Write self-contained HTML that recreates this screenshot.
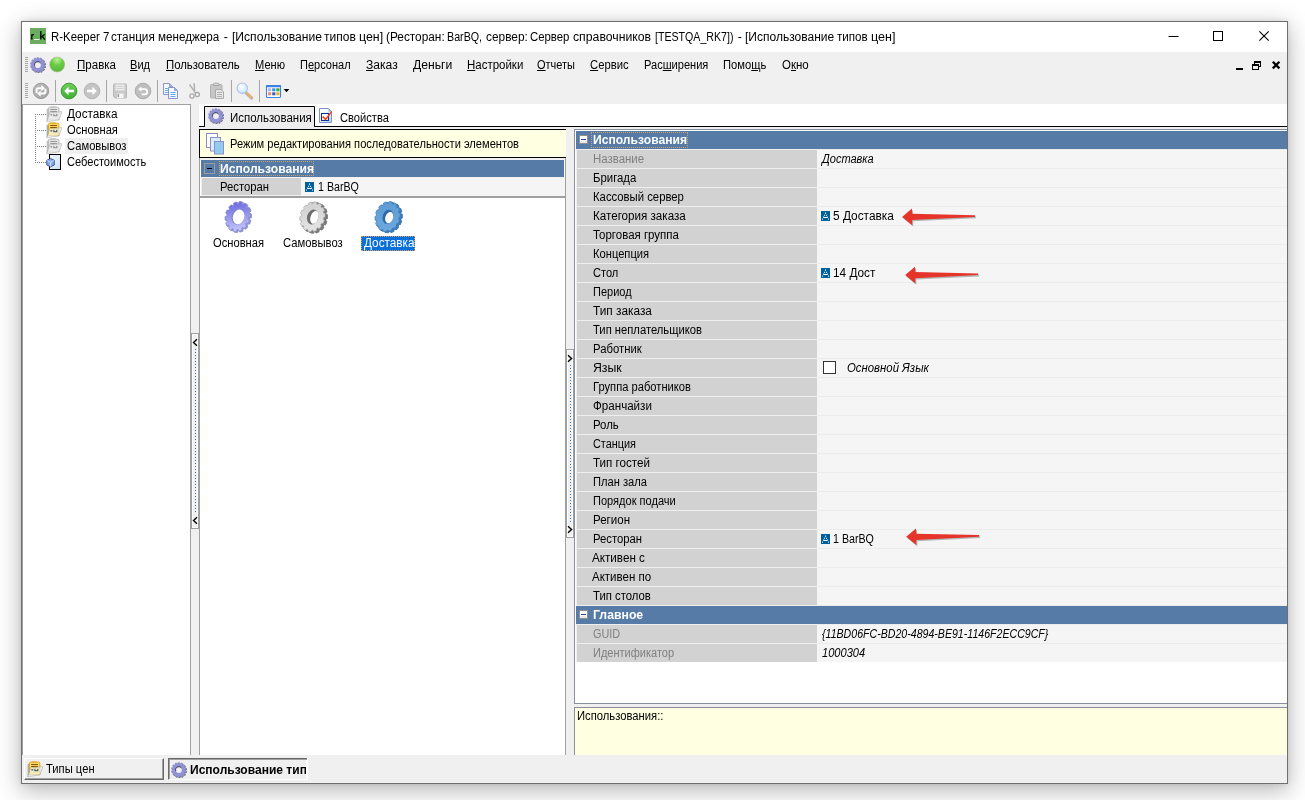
<!DOCTYPE html>
<html lang="ru"><head><meta charset="utf-8"><title>R-Keeper 7</title>
<style>
html,body{margin:0;padding:0;}
body{width:1305px;height:800px;position:relative;overflow:hidden;background:#fff;font-family:"Liberation Sans",sans-serif;}
.a{position:absolute;box-sizing:border-box;}
.t{position:absolute;transform-origin:0 0;white-space:pre;line-height:14px;height:14px;font-family:"Liberation Sans",sans-serif;}
.t u{text-decoration:underline;text-underline-offset:1px;}
svg{position:absolute;overflow:visible;}

</style></head>
<body>
<!-- window frame + shadow -->
<div class="a" style="left:21px;top:21px;width:1267px;height:763px;background:#f0f0f0;border:1px solid #6f6f6f;box-shadow:0 6px 22px 1px rgba(0,0,0,.28),0 0 5px rgba(0,0,0,.10);"></div>
<!-- title bar -->
<div class="a" style="left:22px;top:22px;width:1265px;height:30px;background:#fff;"></div>
<div class="a" style="left:30px;top:28px;width:16px;height:16px;background:#6aad5f;"></div>
<svg style="left:30px;top:28px" width="16" height="16" viewBox="0 0 16 16">
<path d="M1.8 11.6V6.2M1.8 8.2C1.9 6.9 2.8 6.4 4 6.6" stroke="#000" stroke-width="1.3" fill="none"/>
<path d="M10.8 11.6V3M14.6 6.2L11.2 9.3M12.4 8.3L14.8 11.6" stroke="#0b1a08" stroke-width="1.5" fill="none"/>
<rect x="4" y="11" width="5.6" height="1" fill="#e6f2e2"/>
</svg>
<!-- caption buttons -->
<svg style="left:1160px;top:24px" width="120" height="26" viewBox="0 0 120 26">
 <path d="M8.5 12.5h10" stroke="#000" stroke-width="1" fill="none"/>
 <rect x="53.5" y="7.5" width="9" height="9" stroke="#000" stroke-width="1" fill="none"/>
 <path d="M99.4 7.4l9.3 9.3M108.7 7.4l-9.3 9.3" stroke="#000" stroke-width="1.1" fill="none"/>
</svg>
<!-- MDI buttons -->
<svg style="left:1230px;top:56px" width="56" height="20" viewBox="0 0 56 20" shape-rendering="crispEdges">
 <rect x="6" y="12" width="7" height="2" fill="#000"/>
 <rect x="24" y="5" width="7" height="2" fill="#000"/><rect x="30" y="5" width="1" height="6" fill="#000"/><rect x="24" y="5" width="1" height="3" fill="#000"/><rect x="29" y="10" width="2" height="1" fill="#000"/>
 <rect x="22" y="8" width="7" height="2" fill="#000"/><rect x="22" y="8" width="1" height="6" fill="#000"/><rect x="28" y="8" width="1" height="6" fill="#000"/><rect x="22" y="13" width="7" height="1" fill="#000"/>
 <path d="M42.8 5.8l6.6 6.6M49.4 5.8l-6.6 6.6" stroke="#000" stroke-width="2.3" fill="none" shape-rendering="auto"/>
</svg>

<!-- TOOLBARS -->
<div class="a" style="left:25px;top:57px;width:3px;height:1px;background:#a8a8a8;"></div><div class="a" style="left:25px;top:59px;width:3px;height:1px;background:#a8a8a8;"></div><div class="a" style="left:25px;top:61px;width:3px;height:1px;background:#a8a8a8;"></div><div class="a" style="left:25px;top:63px;width:3px;height:1px;background:#a8a8a8;"></div><div class="a" style="left:25px;top:65px;width:3px;height:1px;background:#a8a8a8;"></div><div class="a" style="left:25px;top:67px;width:3px;height:1px;background:#a8a8a8;"></div><div class="a" style="left:25px;top:69px;width:3px;height:1px;background:#a8a8a8;"></div><div class="a" style="left:25px;top:71px;width:3px;height:1px;background:#a8a8a8;"></div><div class="a" style="left:25px;top:83px;width:3px;height:1px;background:#a8a8a8;"></div><div class="a" style="left:25px;top:85px;width:3px;height:1px;background:#a8a8a8;"></div><div class="a" style="left:25px;top:87px;width:3px;height:1px;background:#a8a8a8;"></div><div class="a" style="left:25px;top:89px;width:3px;height:1px;background:#a8a8a8;"></div><div class="a" style="left:25px;top:91px;width:3px;height:1px;background:#a8a8a8;"></div><div class="a" style="left:25px;top:93px;width:3px;height:1px;background:#a8a8a8;"></div><div class="a" style="left:25px;top:95px;width:3px;height:1px;background:#a8a8a8;"></div><div class="a" style="left:25px;top:97px;width:3px;height:1px;background:#a8a8a8;"></div><svg style="left:30px;top:57px" width="17" height="17" viewBox="0 0 17 17">
<path d="M14.09 8.15 L15.26 8.71 L14.89 10.35 L13.60 10.35 L13.36 10.86 L14.17 11.86 L13.13 13.18 L11.97 12.63 L11.53 12.98 L11.82 14.23 L10.31 14.97 L9.50 13.97 L8.95 14.09 L8.67 15.35 L6.99 15.36 L6.70 14.10 L6.15 13.98 L5.35 14.99 L3.84 14.27 L4.12 13.01 L3.68 12.66 L2.52 13.23 L1.47 11.92 L2.27 10.91 L2.02 10.40 L0.73 10.41 L0.35 8.77 L1.51 8.21 L1.51 7.65 L0.34 7.09 L0.71 5.45 L2.00 5.45 L2.24 4.94 L1.43 3.94 L2.47 2.62 L3.63 3.17 L4.07 2.82 L3.78 1.57 L5.29 0.83 L6.10 1.83 L6.65 1.71 L6.93 0.45 L8.61 0.44 L8.90 1.70 L9.45 1.82 L10.25 0.81 L11.76 1.53 L11.48 2.79 L11.92 3.14 L13.08 2.57 L14.13 3.88 L13.33 4.89 L13.58 5.40 L14.87 5.39 L15.25 7.03 L14.09 7.59Z M10.90 7.90 A3.10 3.10 0 1 0 4.70 7.90 A3.10 3.10 0 1 0 10.90 7.90Z" fill="#303038" fill-rule="evenodd" transform="translate(0.7,0.7)" opacity=".78"/>
<path d="M14.09 8.15 L15.26 8.71 L14.89 10.35 L13.60 10.35 L13.36 10.86 L14.17 11.86 L13.13 13.18 L11.97 12.63 L11.53 12.98 L11.82 14.23 L10.31 14.97 L9.50 13.97 L8.95 14.09 L8.67 15.35 L6.99 15.36 L6.70 14.10 L6.15 13.98 L5.35 14.99 L3.84 14.27 L4.12 13.01 L3.68 12.66 L2.52 13.23 L1.47 11.92 L2.27 10.91 L2.02 10.40 L0.73 10.41 L0.35 8.77 L1.51 8.21 L1.51 7.65 L0.34 7.09 L0.71 5.45 L2.00 5.45 L2.24 4.94 L1.43 3.94 L2.47 2.62 L3.63 3.17 L4.07 2.82 L3.78 1.57 L5.29 0.83 L6.10 1.83 L6.65 1.71 L6.93 0.45 L8.61 0.44 L8.90 1.70 L9.45 1.82 L10.25 0.81 L11.76 1.53 L11.48 2.79 L11.92 3.14 L13.08 2.57 L14.13 3.88 L13.33 4.89 L13.58 5.40 L14.87 5.39 L15.25 7.03 L14.09 7.59Z M10.90 7.90 A3.10 3.10 0 1 0 4.70 7.90 A3.10 3.10 0 1 0 10.90 7.90Z" fill="#9192d3" fill-rule="evenodd" stroke="#9192d3" stroke-width="0.45" stroke-linejoin="round"/>
<circle cx="7.8" cy="7.9" r="2.9" fill="#f0f0f2" opacity=".85"/><circle cx="7.8" cy="7.9" r="3.3" fill="none" stroke="#34343f" stroke-width="0.9" opacity=".75" stroke-dasharray="9 30" transform="rotate(165 7.8 7.9)"/>
</svg><svg style="left:49px;top:56px" width="17" height="17" viewBox="0 0 17 17">
<defs><radialGradient id="gb" cx="0.5" cy="0.2" r="0.8"><stop offset="0" stop-color="#b6f58e"/><stop offset="0.45" stop-color="#6bcb47"/><stop offset="1" stop-color="#58b83c"/></radialGradient></defs>
<circle cx="8.2" cy="8.5" r="7.6" fill="url(#gb)" stroke="#c9b8a8" stroke-width="0.5"/></svg><svg style="left:32px;top:82px" width="18" height="18" viewBox="0 0 18 18">
<defs><linearGradient id="rg" x1="0" y1="0" x2="1" y2="1"><stop offset="0" stop-color="#bdbdbd"/><stop offset="1" stop-color="#a2a2a2"/></linearGradient></defs>
<circle cx="9" cy="8.9" r="7.7" fill="url(#rg)" stroke="#9a9a9a" stroke-width="1"/>
<path d="M4.6 11V8Q4.6 6.2 6.4 6.2H9.6" stroke="#fff" stroke-width="2" fill="none"/><path d="M9.3 3.1L12.8 6.2L9.3 9.3Z" fill="#fff"/>
<path d="M13.4 6.8V9.8Q13.4 11.6 11.6 11.6H8.4" stroke="#fff" stroke-width="2" fill="none"/><path d="M8.7 14.7L5.2 11.6L8.7 8.5Z" fill="#fff"/>
</svg><div class="a" style="left:55px;top:80px;width:1px;height:22px;background:#a6a6a6;"></div><svg style="left:60px;top:82px" width="18" height="18" viewBox="0 0 18 18">
<defs><linearGradient id="gg" x1="0" y1="0" x2="0" y2="1"><stop offset="0" stop-color="#6fd05c"/><stop offset="1" stop-color="#3fae32"/></linearGradient></defs>
<circle cx="9" cy="9" r="7.8" fill="url(#gg)" stroke="#3c9a30" stroke-width="1"/>
<path d="M4.2 9L8.6 4.8V7.8H14V10.2H8.6V13.2Z" fill="#fff"/></svg><svg style="left:83px;top:82px" width="18" height="18" viewBox="0 0 18 18">
<circle cx="9" cy="9" r="7.8" fill="#c4c4c4" stroke="#b4b4b4" stroke-width="1"/>
<path d="M13.8 9L9.4 4.8V7.8H4V10.2H9.4V13.2Z" fill="#fff"/></svg><div class="a" style="left:106px;top:80px;width:1px;height:22px;background:#a6a6a6;"></div><svg style="left:113px;top:83px" width="14" height="16" viewBox="0 0 14 16">
<path d="M1.2 1H12.8Q13.5 1 13.5 2V14Q13.5 15 12.5 15H2.2L0.5 13.4V2Q0.5 1 1.2 1Z" fill="#c9c9c9" stroke="#bababa" stroke-width="1"/>
<rect x="2.5" y="1.5" width="9" height="6" fill="#ececec"/><path d="M3.5 3.5h7M3.5 5.5h7" stroke="#d0d0d0" stroke-width="1"/>
<rect x="4" y="10.5" width="6.5" height="4.5" fill="#f6f6f6"/><rect x="4.5" y="11" width="1.6" height="3.2" fill="#a0a0a0"/></svg><svg style="left:134px;top:82px" width="18" height="18" viewBox="0 0 18 18">
<circle cx="9" cy="9" r="7.8" fill="#bebebe" stroke="#adadad" stroke-width="1"/>
<path d="M6.4 7.2H10.6A2.6 2.6 0 0 1 10.6 12.4H7.6" stroke="#fff" stroke-width="1.8" fill="none"/><path d="M4.2 7.2L7.4 4.4V10Z" fill="#fff"/></svg><div class="a" style="left:157px;top:80px;width:1px;height:22px;background:#a6a6a6;"></div><svg style="left:162px;top:82px" width="17" height="18" viewBox="0 0 17 18">
<path d="M1.5 1.5H7.5L10.5 4.5V12.5H1.5Z" fill="#f4faff" stroke="#8c92cc" stroke-width="1"/><path d="M7.5 1.5V4.5H10.5" fill="#7fc0f4" stroke="#8c92cc" stroke-width="0.8"/>
<path d="M3 6.5h3M3 8.5h3M3 10.5h3" stroke="#6ab0f0" stroke-width="1"/>
<path d="M6.5 5.5H12.5L15.5 8.5V16.5H6.5Z" fill="#f4faff" stroke="#8c92cc" stroke-width="1"/><path d="M12.5 5.5V8.5H15.5" fill="#7fc0f4" stroke="#8c92cc" stroke-width="0.8"/>
<path d="M8.5 10.5h5M8.5 12.5h5M8.5 14.5h5" stroke="#5aa8f0" stroke-width="1.2"/></svg><svg style="left:188px;top:82px" width="13" height="18" viewBox="0 0 13 18">
<path d="M1.5 2.5L8.2 11.8M6.2 1.2L6.6 10.5" stroke="#b2b2b2" stroke-width="1.5" fill="none"/>
<circle cx="4" cy="14" r="2.1" fill="#f4f4f4" stroke="#a8a8a8" stroke-width="1.3"/><circle cx="9.3" cy="12.6" r="2.1" fill="#f4f4f4" stroke="#a8a8a8" stroke-width="1.3"/></svg><svg style="left:209px;top:82px" width="16" height="18" viewBox="0 0 16 18">
<rect x="1.5" y="2.5" width="11.5" height="13.5" rx="1" fill="#c6c6c6" stroke="#b0b0b0"/>
<path d="M4.5 3.5V2.2Q4.5 1.2 5.5 1.2H9Q10 1.2 10 2.2V3.5Z" fill="#d8d8d8" stroke="#a8a8a8" stroke-width="1"/>
<path d="M6.5 7.5H12L14.5 10V16.5H6.5Z" fill="#e4e4e4" stroke="#aaa" stroke-width="1"/>
<path d="M8 10.5h5M8 12.5h5M8 14.5h5" stroke="#b4b4b4" stroke-width="1"/></svg><div class="a" style="left:231px;top:80px;width:1px;height:22px;background:#a6a6a6;"></div><svg style="left:236px;top:82px" width="18" height="18" viewBox="0 0 18 18">
<defs><radialGradient id="lens" cx="0.4" cy="0.35" r="0.7"><stop offset="0" stop-color="#ffffff"/><stop offset="1" stop-color="#bfe6fb"/></radialGradient></defs>
<path d="M9.8 10.6L15.6 16" stroke="#b9b4ae" stroke-width="3.2" stroke-linecap="round"/><path d="M10.4 10.4L15.4 15.2" stroke="#eeb064" stroke-width="1.9" stroke-linecap="round"/>
<circle cx="6.3" cy="6.2" r="5.2" fill="url(#lens)" stroke="#b4bcea" stroke-width="1.1"/></svg><div class="a" style="left:259px;top:80px;width:1px;height:22px;background:#a6a6a6;"></div><svg style="left:265px;top:84px" width="26" height="15" viewBox="0 0 26 15">
<rect x="1.5" y="1.5" width="14" height="12" rx="1" fill="#fff" stroke="#3c82e2" stroke-width="1.1"/><rect x="1" y="0.9" width="15" height="2.3" rx="0.8" fill="#3c82e2"/>
<rect x="3" y="4.3" width="3.2" height="3" fill="#b2b2de"/><rect x="7.2" y="4.3" width="3.2" height="3" fill="#3593ea"/><rect x="11.3" y="4.3" width="3.2" height="3" fill="#33a63b"/>
<rect x="3" y="8.3" width="3.2" height="3" fill="#f28a66"/><rect x="7.2" y="8.3" width="3.2" height="3" fill="#3d5cb6"/><rect x="11.3" y="8.3" width="3.2" height="3" fill="#dfb236"/>
<path d="M18.7 5H24.3L21.5 8.2Z" fill="#000"/></svg>

<!-- left tree panel -->
<div class="a" style="left:22px;top:104px;width:169px;height:651px;background:#fff;border:1px solid #a0a0a0;border-bottom:none;"></div>
<div class="a" style="left:65px;top:138px;width:63px;height:16px;background:#f0f0f0;"></div>
<svg style="left:35px;top:114px" width="12" height="50" viewBox="0 0 12 50">
<path d="M0.5 0v49M0 0.5h11M0 16.5h11M0 32.5h11M0 48.5h11" stroke="#808080" stroke-width="1" stroke-dasharray="1 1" fill="none"/></svg><svg style="left:46px;top:106px" width="17" height="17" viewBox="0 0 17 17">
<path d="M0.6 3L2.6 2.4V14L0.6 15.8Z" fill="#c4c4c4"/>
<path d="M4.6 0.5H9.8V1.5H4.6Z" fill="#b2b2b2"/>
<path d="M2.4 2.6Q2.4 1.2 3.8 1.2H11.4Q12.9 1.2 12.9 2.6V13.6H2.4Z" fill="#e4e4e4" stroke="#b2b2b2" stroke-width="0.9"/>
<path d="M4.2 3.5h6.8M4.2 5.5h6.8" stroke="#989898" stroke-width="1.1"/>
<path d="M3.6 6.9L15.9 5.6L13 13.9L0.7 15.7Z" fill="#eeeeee" stroke="#adadad" stroke-width="0.8" opacity="0.78"/>
<path d="M4.4 8.9h1.9M7.9 7.8v2h2.9v-2" stroke="#8c8c8c" stroke-width="1.1" fill="none"/>
</svg><svg style="left:46px;top:122px" width="17" height="17" viewBox="0 0 17 17">
<path d="M0.6 3L2.6 2.4V14L0.6 15.8Z" fill="#a6b2be"/>
<path d="M4.6 0.5H9.8V1.5H4.6Z" fill="#dc9c14"/>
<path d="M2.4 2.6Q2.4 1.2 3.8 1.2H11.4Q12.9 1.2 12.9 2.6V13.6H2.4Z" fill="#fbdc60" stroke="#dc9c14" stroke-width="0.9"/>
<path d="M4.2 3.5h6.8M4.2 5.5h6.8" stroke="#8c4c08" stroke-width="1.1"/>
<path d="M3.6 6.9L15.9 5.6L13 13.9L0.7 15.7Z" fill="#f2f6f8" stroke="#939da8" stroke-width="0.8" opacity="0.62"/>
<path d="M4.4 8.9h1.9M7.9 7.8v2h2.9v-2" stroke="#3c4e72" stroke-width="1.1" fill="none"/>
</svg><svg style="left:46px;top:138px" width="17" height="17" viewBox="0 0 17 17">
<path d="M0.6 3L2.6 2.4V14L0.6 15.8Z" fill="#c4c4c4"/>
<path d="M4.6 0.5H9.8V1.5H4.6Z" fill="#b2b2b2"/>
<path d="M2.4 2.6Q2.4 1.2 3.8 1.2H11.4Q12.9 1.2 12.9 2.6V13.6H2.4Z" fill="#e4e4e4" stroke="#b2b2b2" stroke-width="0.9"/>
<path d="M4.2 3.5h6.8M4.2 5.5h6.8" stroke="#989898" stroke-width="1.1"/>
<path d="M3.6 6.9L15.9 5.6L13 13.9L0.7 15.7Z" fill="#eeeeee" stroke="#adadad" stroke-width="0.8" opacity="0.78"/>
<path d="M4.4 8.9h1.9M7.9 7.8v2h2.9v-2" stroke="#8c8c8c" stroke-width="1.1" fill="none"/>
</svg><svg style="left:46px;top:154px" width="17" height="17" viewBox="0 0 17 17">
<defs><linearGradient id="dc" x1="0" y1="0" x2="1" y2="1"><stop offset="0" stop-color="#f4fafc"/><stop offset="1" stop-color="#c6dff0"/></linearGradient></defs>
<rect x="3.5" y="0.5" width="11" height="15" fill="url(#dc)" stroke="#000" stroke-width="1"/>
<path d="M4.5 4.4L8.3 6.3V10.9L4.5 13L0.7 10.9V6.3Z" fill="#84a8f2" stroke="#1c2c58" stroke-width="0.7"/>
<path d="M0.9 6.4L4.5 8.3L8.1 6.4M4.5 8.3V12.8" stroke="#dfe9ff" stroke-width="0.8" fill="none"/>
</svg>

<!-- splitter 1 -->
<div class="a" style="left:190px;top:333px;width:10px;height:196px;background:#a0a0a0;"></div>
<div class="a" style="left:192px;top:334px;width:6px;height:194px;background:#fff;"></div>
<div class="a" style="left:193px;top:335px;width:4px;height:192px;background:#f0f0f0;"></div>
<svg style="left:190px;top:333px" width="10" height="196" viewBox="0 0 10 196">
 <path d="M7.0 6.2L3.5 9.5L7.0 12.8M7.0 184.2L3.5 187.5L7.0 190.8" stroke="#000" stroke-width="1.4" fill="none"/>
 <path d="M5.5 16v163" stroke="#1a7fe6" stroke-width="1" stroke-dasharray="1 2" fill="none"/>
</svg>

<!-- middle panel -->
<div class="a" style="left:199px;top:104px;width:1088px;height:22px;background:#fff;"></div>
<div class="a" style="left:199px;top:126px;width:1088px;height:1px;background:#000;"></div>
<div class="a" style="left:199px;top:158px;width:367px;height:597px;background:#f0f0f0;border-left:1px solid #a0a0a0;border-right:1px solid #a0a0a0;"></div>
<div class="a" style="left:200px;top:160px;width:365px;height:595px;background:#fff;"></div>
<!-- tab -->
<svg style="left:199px;top:104px" width="200" height="25" viewBox="0 0 200 25">
 <path d="M0 22.5H5.5V2.5H115.5V22.5" fill="#ededed" stroke="#000" stroke-width="1"/>
 <rect x="6" y="22" width="109" height="3" fill="#ededed"/>
</svg>
<svg style="left:208px;top:108px" width="17" height="17" viewBox="0 0 17 17">
<path d="M14.09 8.15 L15.26 8.71 L14.89 10.35 L13.60 10.35 L13.36 10.86 L14.17 11.86 L13.13 13.18 L11.97 12.63 L11.53 12.98 L11.82 14.23 L10.31 14.97 L9.50 13.97 L8.95 14.09 L8.67 15.35 L6.99 15.36 L6.70 14.10 L6.15 13.98 L5.35 14.99 L3.84 14.27 L4.12 13.01 L3.68 12.66 L2.52 13.23 L1.47 11.92 L2.27 10.91 L2.02 10.40 L0.73 10.41 L0.35 8.77 L1.51 8.21 L1.51 7.65 L0.34 7.09 L0.71 5.45 L2.00 5.45 L2.24 4.94 L1.43 3.94 L2.47 2.62 L3.63 3.17 L4.07 2.82 L3.78 1.57 L5.29 0.83 L6.10 1.83 L6.65 1.71 L6.93 0.45 L8.61 0.44 L8.90 1.70 L9.45 1.82 L10.25 0.81 L11.76 1.53 L11.48 2.79 L11.92 3.14 L13.08 2.57 L14.13 3.88 L13.33 4.89 L13.58 5.40 L14.87 5.39 L15.25 7.03 L14.09 7.59Z M10.90 7.90 A3.10 3.10 0 1 0 4.70 7.90 A3.10 3.10 0 1 0 10.90 7.90Z" fill="#303038" fill-rule="evenodd" transform="translate(0.7,0.7)" opacity=".78"/>
<path d="M14.09 8.15 L15.26 8.71 L14.89 10.35 L13.60 10.35 L13.36 10.86 L14.17 11.86 L13.13 13.18 L11.97 12.63 L11.53 12.98 L11.82 14.23 L10.31 14.97 L9.50 13.97 L8.95 14.09 L8.67 15.35 L6.99 15.36 L6.70 14.10 L6.15 13.98 L5.35 14.99 L3.84 14.27 L4.12 13.01 L3.68 12.66 L2.52 13.23 L1.47 11.92 L2.27 10.91 L2.02 10.40 L0.73 10.41 L0.35 8.77 L1.51 8.21 L1.51 7.65 L0.34 7.09 L0.71 5.45 L2.00 5.45 L2.24 4.94 L1.43 3.94 L2.47 2.62 L3.63 3.17 L4.07 2.82 L3.78 1.57 L5.29 0.83 L6.10 1.83 L6.65 1.71 L6.93 0.45 L8.61 0.44 L8.90 1.70 L9.45 1.82 L10.25 0.81 L11.76 1.53 L11.48 2.79 L11.92 3.14 L13.08 2.57 L14.13 3.88 L13.33 4.89 L13.58 5.40 L14.87 5.39 L15.25 7.03 L14.09 7.59Z M10.90 7.90 A3.10 3.10 0 1 0 4.70 7.90 A3.10 3.10 0 1 0 10.90 7.90Z" fill="#9192d3" fill-rule="evenodd" stroke="#9192d3" stroke-width="0.45" stroke-linejoin="round"/>
<circle cx="7.8" cy="7.9" r="2.9" fill="#f0f0f2" opacity=".85"/><circle cx="7.8" cy="7.9" r="3.3" fill="none" stroke="#34343f" stroke-width="0.9" opacity=".75" stroke-dasharray="9 30" transform="rotate(165 7.8 7.9)"/>
</svg><svg style="left:319px;top:108px" width="14" height="15" viewBox="0 0 14 15">
<defs><linearGradient id="pd" x1="0" y1="0" x2="1" y2="1"><stop offset="0.3" stop-color="#fff"/><stop offset="1" stop-color="#a9dcf8"/></linearGradient></defs>
<path d="M0.5 0.5H9.5L12.5 3.5V14.5H0.5Z" fill="url(#pd)" stroke="#7f8fd2" stroke-width="1"/><path d="M9.5 0.5V3.5H12.5Z" fill="#6ab8f6"/>
<rect x="2.5" y="5.5" width="7" height="7" fill="#fff" stroke="#0a2f9e" stroke-width="1.1"/>
<path d="M3.6 8.6L6.6 11.4L12.8 3.4" stroke="#ff3a0a" stroke-width="1.5" fill="none"/></svg>
<!-- info bar -->
<div class="a" style="left:199px;top:129px;width:367px;height:29px;background:#ffffe1;border:1px solid #000;border-right:none;"></div>
<svg style="left:205px;top:132px" width="20" height="23" viewBox="0 0 20 23">
<rect x="1.5" y="1.5" width="11" height="14" fill="#fdfeff" stroke="#8a8ac6" stroke-width="1"/>
<rect x="5.5" y="5.5" width="10" height="13.5" fill="#d9eefb" stroke="#8a8ac6" stroke-width="1" opacity=".95"/>
<rect x="9.5" y="9.5" width="9" height="12.5" fill="#8ecbf1" stroke="#8a8ac6" stroke-width="1" opacity=".95"/></svg>
<!-- header -->
<div class="a" style="left:201px;top:160px;width:363px;height:17px;background:#557ba6;"></div>
<div class="a" style="left:204px;top:163px;width:11px;height:11px;border:1px solid #9b9b9b;background:#557ba6;"></div>
<div class="a" style="left:207px;top:168px;width:5px;height:1px;background:#000;"></div>
<div class="a" style="left:219px;top:161px;width:95px;height:15px;border:1px dotted #c9a26b;"></div>
<!-- row -->
<div class="a" style="left:201px;top:177px;width:364px;height:1px;background:#f2f2f2;"></div>
<div class="a" style="left:201px;top:178px;width:100px;height:18px;background:#efefef;"></div>
<div class="a" style="left:202px;top:178px;width:99px;height:17px;background:#d2d2d2;"></div>
<div class="a" style="left:301px;top:178px;width:264px;height:18px;background:#f5f5f5;"></div>
<div class="a" style="left:200px;top:196px;width:365px;height:2px;background:#a0a0a0;"></div>
<svg style="left:305px;top:182px" width="9" height="10" viewBox="0 0 9 10">
<rect width="9" height="10" fill="#00609c"/>
<path d="M1.5 8.6V7.6M7.5 8.6V7.6M2.5 6.5h4M2.5 5.6v0.9M6.5 5.6v0.9M3.5 4.8v-1M5.5 4.8v-1M4.5 2.8v-1.3" stroke="#fff" stroke-width="1" fill="none"/>
</svg>
<!-- selection -->
<div class="a" style="left:361px;top:236px;width:54px;height:15px;background:#0a6fd8;border:1px dotted #d9a066;"></div>
<svg style="left:0;top:0" width="1305" height="800" viewBox="0 0 1305 800">
<defs><linearGradient id="g1" gradientUnits="userSpaceOnUse" x1="-6" y1="-16" x2="6" y2="16"><stop offset="0" stop-color="#6462de"/><stop offset="1" stop-color="#cfcfff"/></linearGradient></defs>
<g transform="translate(1.4,0.8)"><path d="M13.07 -0.86 L15.30 -0.19 L14.96 3.22 L12.64 3.44 L12.15 4.89 L13.86 6.47 L12.08 9.39 L9.89 8.59 L8.83 9.68 L9.68 11.84 L6.81 13.70 L5.19 12.03 L3.75 12.55 L3.59 14.87 L0.19 15.30 L-0.55 13.09 L-2.07 12.94 L-3.22 14.96 L-6.47 13.86 L-6.17 11.56 L-7.47 10.76 L-9.39 12.08 L-11.84 9.68 L-10.57 7.73 L-11.40 6.45 L-13.70 6.81 L-14.87 3.59 L-12.88 2.38 L-13.07 0.86 L-15.30 0.19 L-14.96 -3.22 L-12.64 -3.44 L-12.15 -4.89 L-13.86 -6.47 L-12.08 -9.39 L-9.89 -8.59 L-8.83 -9.68 L-9.68 -11.84 L-6.81 -13.70 L-5.19 -12.03 L-3.75 -12.55 L-3.59 -14.87 L-0.19 -15.30 L0.55 -13.09 L2.07 -12.94 L3.22 -14.96 L6.47 -13.86 L6.17 -11.56 L7.47 -10.76 L9.39 -12.08 L11.84 -9.68 L10.57 -7.73 L11.40 -6.45 L13.70 -6.81 L14.87 -3.59 L12.88 -2.38Z" transform="translate(237.6,216.6) rotate(17) scale(0.81,1)" fill="#8f95c6" stroke="#8f95c6" stroke-width="1" stroke-linejoin="round"/></g>
<g transform="translate(0.7,0.4)"><path d="M13.07 -0.86 L15.30 -0.19 L14.96 3.22 L12.64 3.44 L12.15 4.89 L13.86 6.47 L12.08 9.39 L9.89 8.59 L8.83 9.68 L9.68 11.84 L6.81 13.70 L5.19 12.03 L3.75 12.55 L3.59 14.87 L0.19 15.30 L-0.55 13.09 L-2.07 12.94 L-3.22 14.96 L-6.47 13.86 L-6.17 11.56 L-7.47 10.76 L-9.39 12.08 L-11.84 9.68 L-10.57 7.73 L-11.40 6.45 L-13.70 6.81 L-14.87 3.59 L-12.88 2.38 L-13.07 0.86 L-15.30 0.19 L-14.96 -3.22 L-12.64 -3.44 L-12.15 -4.89 L-13.86 -6.47 L-12.08 -9.39 L-9.89 -8.59 L-8.83 -9.68 L-9.68 -11.84 L-6.81 -13.70 L-5.19 -12.03 L-3.75 -12.55 L-3.59 -14.87 L-0.19 -15.30 L0.55 -13.09 L2.07 -12.94 L3.22 -14.96 L6.47 -13.86 L6.17 -11.56 L7.47 -10.76 L9.39 -12.08 L11.84 -9.68 L10.57 -7.73 L11.40 -6.45 L13.70 -6.81 L14.87 -3.59 L12.88 -2.38Z" transform="translate(237.6,216.6) rotate(17) scale(0.81,1)" fill="#8f95c6" stroke="#8f95c6" stroke-width="1" stroke-linejoin="round"/></g>
<path d="M13.07 -0.86 L15.30 -0.19 L14.96 3.22 L12.64 3.44 L12.15 4.89 L13.86 6.47 L12.08 9.39 L9.89 8.59 L8.83 9.68 L9.68 11.84 L6.81 13.70 L5.19 12.03 L3.75 12.55 L3.59 14.87 L0.19 15.30 L-0.55 13.09 L-2.07 12.94 L-3.22 14.96 L-6.47 13.86 L-6.17 11.56 L-7.47 10.76 L-9.39 12.08 L-11.84 9.68 L-10.57 7.73 L-11.40 6.45 L-13.70 6.81 L-14.87 3.59 L-12.88 2.38 L-13.07 0.86 L-15.30 0.19 L-14.96 -3.22 L-12.64 -3.44 L-12.15 -4.89 L-13.86 -6.47 L-12.08 -9.39 L-9.89 -8.59 L-8.83 -9.68 L-9.68 -11.84 L-6.81 -13.70 L-5.19 -12.03 L-3.75 -12.55 L-3.59 -14.87 L-0.19 -15.30 L0.55 -13.09 L2.07 -12.94 L3.22 -14.96 L6.47 -13.86 L6.17 -11.56 L7.47 -10.76 L9.39 -12.08 L11.84 -9.68 L10.57 -7.73 L11.40 -6.45 L13.70 -6.81 L14.87 -3.59 L12.88 -2.38Z" transform="translate(237.6,216.6) rotate(17) scale(0.81,1)" fill="url(#g1)" stroke="#8a8fd4" stroke-width="0.7" stroke-linejoin="round"/>
<ellipse cx="0" cy="0" rx="8.0" ry="7.9" transform="translate(237.9,216.79999999999998) rotate(17) scale(0.80,1)" fill="#7f86c0"/>
<ellipse cx="0" cy="0" rx="7.3" ry="7.5" transform="translate(238.6,216.9) rotate(17) scale(0.78,1)" fill="#fff"/>
</svg><svg style="left:0;top:0" width="1305" height="800" viewBox="0 0 1305 800">
<defs><linearGradient id="g2" gradientUnits="userSpaceOnUse" x1="-6" y1="-16" x2="6" y2="16"><stop offset="0" stop-color="#cfcfcf"/><stop offset="1" stop-color="#e6e6e6"/></linearGradient></defs>
<g transform="translate(2.6,1.4)"><path d="M13.57 -0.90 L15.30 -0.19 L14.96 3.22 L13.12 3.58 L12.62 5.08 L13.86 6.47 L12.08 9.39 L10.27 8.91 L9.16 10.05 L9.68 11.84 L6.81 13.70 L5.39 12.49 L3.89 13.03 L3.59 14.87 L0.19 15.30 L-0.57 13.59 L-2.14 13.43 L-3.22 14.96 L-6.47 13.86 L-6.41 12.00 L-7.76 11.17 L-9.39 12.08 L-11.84 9.68 L-10.98 8.03 L-11.84 6.70 L-13.70 6.81 L-14.87 3.59 L-13.37 2.47 L-13.57 0.90 L-15.30 0.19 L-14.96 -3.22 L-13.12 -3.58 L-12.62 -5.08 L-13.86 -6.47 L-12.08 -9.39 L-10.27 -8.91 L-9.16 -10.05 L-9.68 -11.84 L-6.81 -13.70 L-5.39 -12.49 L-3.89 -13.03 L-3.59 -14.87 L-0.19 -15.30 L0.57 -13.59 L2.14 -13.43 L3.22 -14.96 L6.47 -13.86 L6.41 -12.00 L7.76 -11.17 L9.39 -12.08 L11.84 -9.68 L10.98 -8.03 L11.84 -6.70 L13.70 -6.81 L14.87 -3.59 L13.37 -2.47Z" transform="translate(312.4,216.8) rotate(17) scale(0.81,1)" fill="#7a7a7a" stroke="#7a7a7a" stroke-width="1" stroke-linejoin="round"/></g>
<g transform="translate(1.3,0.7)"><path d="M13.57 -0.90 L15.30 -0.19 L14.96 3.22 L13.12 3.58 L12.62 5.08 L13.86 6.47 L12.08 9.39 L10.27 8.91 L9.16 10.05 L9.68 11.84 L6.81 13.70 L5.39 12.49 L3.89 13.03 L3.59 14.87 L0.19 15.30 L-0.57 13.59 L-2.14 13.43 L-3.22 14.96 L-6.47 13.86 L-6.41 12.00 L-7.76 11.17 L-9.39 12.08 L-11.84 9.68 L-10.98 8.03 L-11.84 6.70 L-13.70 6.81 L-14.87 3.59 L-13.37 2.47 L-13.57 0.90 L-15.30 0.19 L-14.96 -3.22 L-13.12 -3.58 L-12.62 -5.08 L-13.86 -6.47 L-12.08 -9.39 L-10.27 -8.91 L-9.16 -10.05 L-9.68 -11.84 L-6.81 -13.70 L-5.39 -12.49 L-3.89 -13.03 L-3.59 -14.87 L-0.19 -15.30 L0.57 -13.59 L2.14 -13.43 L3.22 -14.96 L6.47 -13.86 L6.41 -12.00 L7.76 -11.17 L9.39 -12.08 L11.84 -9.68 L10.98 -8.03 L11.84 -6.70 L13.70 -6.81 L14.87 -3.59 L13.37 -2.47Z" transform="translate(312.4,216.8) rotate(17) scale(0.81,1)" fill="#7a7a7a" stroke="#7a7a7a" stroke-width="1" stroke-linejoin="round"/></g>
<path d="M13.57 -0.90 L15.30 -0.19 L14.96 3.22 L13.12 3.58 L12.62 5.08 L13.86 6.47 L12.08 9.39 L10.27 8.91 L9.16 10.05 L9.68 11.84 L6.81 13.70 L5.39 12.49 L3.89 13.03 L3.59 14.87 L0.19 15.30 L-0.57 13.59 L-2.14 13.43 L-3.22 14.96 L-6.47 13.86 L-6.41 12.00 L-7.76 11.17 L-9.39 12.08 L-11.84 9.68 L-10.98 8.03 L-11.84 6.70 L-13.70 6.81 L-14.87 3.59 L-13.37 2.47 L-13.57 0.90 L-15.30 0.19 L-14.96 -3.22 L-13.12 -3.58 L-12.62 -5.08 L-13.86 -6.47 L-12.08 -9.39 L-10.27 -8.91 L-9.16 -10.05 L-9.68 -11.84 L-6.81 -13.70 L-5.39 -12.49 L-3.89 -13.03 L-3.59 -14.87 L-0.19 -15.30 L0.57 -13.59 L2.14 -13.43 L3.22 -14.96 L6.47 -13.86 L6.41 -12.00 L7.76 -11.17 L9.39 -12.08 L11.84 -9.68 L10.98 -8.03 L11.84 -6.70 L13.70 -6.81 L14.87 -3.59 L13.37 -2.47Z" transform="translate(312.4,216.8) rotate(17) scale(0.81,1)" fill="url(#g2)" stroke="#b0b0b0" stroke-width="0.7" stroke-linejoin="round"/>
<ellipse cx="0" cy="0" rx="7.0" ry="7.6" transform="translate(312.7,217.0) rotate(17) scale(0.80,1)" fill="#6e6e6e"/>
<ellipse cx="0" cy="0" rx="5.0" ry="6.6" transform="translate(314.4,217.4) rotate(17) scale(0.78,1)" fill="#fff"/>
</svg><svg style="left:0;top:0" width="1305" height="800" viewBox="0 0 1305 800">
<defs><linearGradient id="g3" gradientUnits="userSpaceOnUse" x1="-6" y1="-16" x2="6" y2="16"><stop offset="0" stop-color="#5a9ad4"/><stop offset="1" stop-color="#6faadf"/></linearGradient></defs>
<g transform="translate(2.2,1.2)"><path d="M13.87 -0.92 L15.30 -0.19 L14.96 3.22 L13.41 3.65 L12.89 5.19 L13.86 6.47 L12.08 9.39 L10.50 9.11 L9.36 10.27 L9.68 11.84 L6.81 13.70 L5.50 12.76 L3.98 13.32 L3.59 14.87 L0.19 15.30 L-0.58 13.89 L-2.19 13.73 L-3.22 14.96 L-6.47 13.86 L-6.55 12.26 L-7.93 11.42 L-9.39 12.08 L-11.84 9.68 L-11.22 8.21 L-12.10 6.84 L-13.70 6.81 L-14.87 3.59 L-13.67 2.53 L-13.87 0.92 L-15.30 0.19 L-14.96 -3.22 L-13.41 -3.65 L-12.89 -5.19 L-13.86 -6.47 L-12.08 -9.39 L-10.50 -9.11 L-9.36 -10.27 L-9.68 -11.84 L-6.81 -13.70 L-5.50 -12.76 L-3.98 -13.32 L-3.59 -14.87 L-0.19 -15.30 L0.58 -13.89 L2.19 -13.73 L3.22 -14.96 L6.47 -13.86 L6.55 -12.26 L7.93 -11.42 L9.39 -12.08 L11.84 -9.68 L11.22 -8.21 L12.10 -6.84 L13.70 -6.81 L14.87 -3.59 L13.67 -2.53Z" transform="translate(387.6,216.6) rotate(17) scale(0.81,1)" fill="#3d7bb6" stroke="#3d7bb6" stroke-width="1" stroke-linejoin="round"/></g>
<g transform="translate(1.1,0.6)"><path d="M13.87 -0.92 L15.30 -0.19 L14.96 3.22 L13.41 3.65 L12.89 5.19 L13.86 6.47 L12.08 9.39 L10.50 9.11 L9.36 10.27 L9.68 11.84 L6.81 13.70 L5.50 12.76 L3.98 13.32 L3.59 14.87 L0.19 15.30 L-0.58 13.89 L-2.19 13.73 L-3.22 14.96 L-6.47 13.86 L-6.55 12.26 L-7.93 11.42 L-9.39 12.08 L-11.84 9.68 L-11.22 8.21 L-12.10 6.84 L-13.70 6.81 L-14.87 3.59 L-13.67 2.53 L-13.87 0.92 L-15.30 0.19 L-14.96 -3.22 L-13.41 -3.65 L-12.89 -5.19 L-13.86 -6.47 L-12.08 -9.39 L-10.50 -9.11 L-9.36 -10.27 L-9.68 -11.84 L-6.81 -13.70 L-5.50 -12.76 L-3.98 -13.32 L-3.59 -14.87 L-0.19 -15.30 L0.58 -13.89 L2.19 -13.73 L3.22 -14.96 L6.47 -13.86 L6.55 -12.26 L7.93 -11.42 L9.39 -12.08 L11.84 -9.68 L11.22 -8.21 L12.10 -6.84 L13.70 -6.81 L14.87 -3.59 L13.67 -2.53Z" transform="translate(387.6,216.6) rotate(17) scale(0.81,1)" fill="#3d7bb6" stroke="#3d7bb6" stroke-width="1" stroke-linejoin="round"/></g>
<path d="M13.87 -0.92 L15.30 -0.19 L14.96 3.22 L13.41 3.65 L12.89 5.19 L13.86 6.47 L12.08 9.39 L10.50 9.11 L9.36 10.27 L9.68 11.84 L6.81 13.70 L5.50 12.76 L3.98 13.32 L3.59 14.87 L0.19 15.30 L-0.58 13.89 L-2.19 13.73 L-3.22 14.96 L-6.47 13.86 L-6.55 12.26 L-7.93 11.42 L-9.39 12.08 L-11.84 9.68 L-11.22 8.21 L-12.10 6.84 L-13.70 6.81 L-14.87 3.59 L-13.67 2.53 L-13.87 0.92 L-15.30 0.19 L-14.96 -3.22 L-13.41 -3.65 L-12.89 -5.19 L-13.86 -6.47 L-12.08 -9.39 L-10.50 -9.11 L-9.36 -10.27 L-9.68 -11.84 L-6.81 -13.70 L-5.50 -12.76 L-3.98 -13.32 L-3.59 -14.87 L-0.19 -15.30 L0.58 -13.89 L2.19 -13.73 L3.22 -14.96 L6.47 -13.86 L6.55 -12.26 L7.93 -11.42 L9.39 -12.08 L11.84 -9.68 L11.22 -8.21 L12.10 -6.84 L13.70 -6.81 L14.87 -3.59 L13.67 -2.53Z" transform="translate(387.6,216.6) rotate(17) scale(0.81,1)" fill="url(#g3)" stroke="#447fb8" stroke-width="0.7" stroke-linejoin="round"/>
<ellipse cx="0" cy="0" rx="6.6" ry="7.2" transform="translate(387.90000000000003,216.79999999999998) rotate(17) scale(0.80,1)" fill="#2f6aa6"/>
<ellipse cx="0" cy="0" rx="4.9" ry="5.8" transform="translate(389.20000000000005,217.6) rotate(17) scale(0.78,1)" fill="#fff"/>
</svg>

<!-- splitter 2 -->
<div class="a" style="left:565px;top:349px;width:10px;height:189px;background:#a0a0a0;"></div>
<div class="a" style="left:567px;top:350px;width:6px;height:187px;background:#fff;"></div>
<div class="a" style="left:568px;top:351px;width:4px;height:185px;background:#f0f0f0;"></div>
<svg style="left:565px;top:349px" width="10" height="189" viewBox="0 0 10 189">
 <path d="M3.0 6.2L6.6 9.5L3.0 12.8M3.0 177.2L6.6 180.5L3.0 183.8" stroke="#000" stroke-width="1.4" fill="none"/>
 <path d="M5.5 16v157" stroke="#1a7fe6" stroke-width="1" stroke-dasharray="1 2" fill="none"/>
</svg>

<!-- right panel -->
<div class="a" style="left:574px;top:129px;width:713px;height:575px;background:#fff;border:1px solid #8a909b;border-right:none;"></div>
<div class="a" style="left:576px;top:131px;width:711px;height:18px;background:#557ba6;"></div>
<div class="a" style="left:579px;top:135px;width:9px;height:9px;background:#fff;border:1px solid #8f8f8f;"></div>
<div class="a" style="left:581px;top:139px;width:5px;height:1px;background:#2b3f9e;"></div>
<div class="a" style="left:580px;top:141px;width:7px;height:2px;background:#e8e8e8;"></div>
<div class="a" style="left:591px;top:132px;width:97px;height:16px;background:transparent;border:1px dotted #c9a26b;"></div>
<div class="a" style="left:576px;top:149px;width:241px;height:457px;background:#efefef;"></div>
<div class="a" style="left:817px;top:149px;width:470px;height:457px;background:#ececec;"></div>
<div class="a" style="left:577px;top:150px;width:240px;height:18px;background:#d2d2d2;"></div>
<div class="a" style="left:817px;top:150px;width:470px;height:18px;background:#f5f5f5;"></div>
<div class="a" style="left:577px;top:169px;width:240px;height:18px;background:#d2d2d2;"></div>
<div class="a" style="left:817px;top:169px;width:470px;height:18px;background:#f5f5f5;"></div>
<div class="a" style="left:577px;top:188px;width:240px;height:18px;background:#d2d2d2;"></div>
<div class="a" style="left:817px;top:188px;width:470px;height:18px;background:#f5f5f5;"></div>
<div class="a" style="left:577px;top:207px;width:240px;height:18px;background:#d2d2d2;"></div>
<div class="a" style="left:817px;top:207px;width:470px;height:18px;background:#f5f5f5;"></div>
<div class="a" style="left:577px;top:226px;width:240px;height:18px;background:#d2d2d2;"></div>
<div class="a" style="left:817px;top:226px;width:470px;height:18px;background:#f5f5f5;"></div>
<div class="a" style="left:577px;top:245px;width:240px;height:18px;background:#d2d2d2;"></div>
<div class="a" style="left:817px;top:245px;width:470px;height:18px;background:#f5f5f5;"></div>
<div class="a" style="left:577px;top:264px;width:240px;height:18px;background:#d2d2d2;"></div>
<div class="a" style="left:817px;top:264px;width:470px;height:18px;background:#f5f5f5;"></div>
<div class="a" style="left:577px;top:283px;width:240px;height:18px;background:#d2d2d2;"></div>
<div class="a" style="left:817px;top:283px;width:470px;height:18px;background:#f5f5f5;"></div>
<div class="a" style="left:577px;top:302px;width:240px;height:18px;background:#d2d2d2;"></div>
<div class="a" style="left:817px;top:302px;width:470px;height:18px;background:#f5f5f5;"></div>
<div class="a" style="left:577px;top:321px;width:240px;height:18px;background:#d2d2d2;"></div>
<div class="a" style="left:817px;top:321px;width:470px;height:18px;background:#f5f5f5;"></div>
<div class="a" style="left:577px;top:340px;width:240px;height:18px;background:#d2d2d2;"></div>
<div class="a" style="left:817px;top:340px;width:470px;height:18px;background:#f5f5f5;"></div>
<div class="a" style="left:577px;top:359px;width:240px;height:18px;background:#d2d2d2;"></div>
<div class="a" style="left:817px;top:359px;width:470px;height:18px;background:#f5f5f5;"></div>
<div class="a" style="left:577px;top:378px;width:240px;height:18px;background:#d2d2d2;"></div>
<div class="a" style="left:817px;top:378px;width:470px;height:18px;background:#f5f5f5;"></div>
<div class="a" style="left:577px;top:397px;width:240px;height:18px;background:#d2d2d2;"></div>
<div class="a" style="left:817px;top:397px;width:470px;height:18px;background:#f5f5f5;"></div>
<div class="a" style="left:577px;top:416px;width:240px;height:18px;background:#d2d2d2;"></div>
<div class="a" style="left:817px;top:416px;width:470px;height:18px;background:#f5f5f5;"></div>
<div class="a" style="left:577px;top:435px;width:240px;height:18px;background:#d2d2d2;"></div>
<div class="a" style="left:817px;top:435px;width:470px;height:18px;background:#f5f5f5;"></div>
<div class="a" style="left:577px;top:454px;width:240px;height:18px;background:#d2d2d2;"></div>
<div class="a" style="left:817px;top:454px;width:470px;height:18px;background:#f5f5f5;"></div>
<div class="a" style="left:577px;top:473px;width:240px;height:18px;background:#d2d2d2;"></div>
<div class="a" style="left:817px;top:473px;width:470px;height:18px;background:#f5f5f5;"></div>
<div class="a" style="left:577px;top:492px;width:240px;height:18px;background:#d2d2d2;"></div>
<div class="a" style="left:817px;top:492px;width:470px;height:18px;background:#f5f5f5;"></div>
<div class="a" style="left:577px;top:511px;width:240px;height:18px;background:#d2d2d2;"></div>
<div class="a" style="left:817px;top:511px;width:470px;height:18px;background:#f5f5f5;"></div>
<div class="a" style="left:577px;top:530px;width:240px;height:18px;background:#d2d2d2;"></div>
<div class="a" style="left:817px;top:530px;width:470px;height:18px;background:#f5f5f5;"></div>
<div class="a" style="left:577px;top:549px;width:240px;height:18px;background:#d2d2d2;"></div>
<div class="a" style="left:817px;top:549px;width:470px;height:18px;background:#f5f5f5;"></div>
<div class="a" style="left:577px;top:568px;width:240px;height:18px;background:#d2d2d2;"></div>
<div class="a" style="left:817px;top:568px;width:470px;height:18px;background:#f5f5f5;"></div>
<div class="a" style="left:577px;top:587px;width:240px;height:18px;background:#d2d2d2;"></div>
<div class="a" style="left:817px;top:587px;width:470px;height:18px;background:#f5f5f5;"></div>
<div class="a" style="left:576px;top:606px;width:711px;height:18px;background:#557ba6;"></div>
<div class="a" style="left:579px;top:610px;width:9px;height:9px;background:#fff;border:1px solid #8f8f8f;"></div>
<div class="a" style="left:581px;top:614px;width:5px;height:1px;background:#2b3f9e;"></div>
<div class="a" style="left:580px;top:616px;width:7px;height:2px;background:#e8e8e8;"></div>
<div class="a" style="left:576px;top:624px;width:241px;height:38px;background:#efefef;"></div>
<div class="a" style="left:817px;top:624px;width:470px;height:38px;background:#ececec;"></div>
<div class="a" style="left:577px;top:625px;width:240px;height:18px;background:#d2d2d2;"></div>
<div class="a" style="left:817px;top:625px;width:470px;height:18px;background:#f5f5f5;"></div>
<div class="a" style="left:577px;top:644px;width:240px;height:18px;background:#d2d2d2;"></div>
<div class="a" style="left:817px;top:644px;width:470px;height:18px;background:#f5f5f5;"></div>
<div class="a" style="left:823px;top:361px;width:13px;height:13px;background:#fff;border:1px solid #333;"></div>
<svg style="left:821px;top:211px" width="9" height="10" viewBox="0 0 9 10">
<rect width="9" height="10" fill="#00609c"/>
<path d="M1.5 8.6V7.6M7.5 8.6V7.6M2.5 6.5h4M2.5 5.6v0.9M6.5 5.6v0.9M3.5 4.8v-1M5.5 4.8v-1M4.5 2.8v-1.3" stroke="#fff" stroke-width="1" fill="none"/>
</svg>
<svg style="left:821px;top:268px" width="9" height="10" viewBox="0 0 9 10">
<rect width="9" height="10" fill="#00609c"/>
<path d="M1.5 8.6V7.6M7.5 8.6V7.6M2.5 6.5h4M2.5 5.6v0.9M6.5 5.6v0.9M3.5 4.8v-1M5.5 4.8v-1M4.5 2.8v-1.3" stroke="#fff" stroke-width="1" fill="none"/>
</svg>
<svg style="left:821px;top:534px" width="9" height="10" viewBox="0 0 9 10">
<rect width="9" height="10" fill="#00609c"/>
<path d="M1.5 8.6V7.6M7.5 8.6V7.6M2.5 6.5h4M2.5 5.6v0.9M6.5 5.6v0.9M3.5 4.8v-1M5.5 4.8v-1M4.5 2.8v-1.3" stroke="#fff" stroke-width="1" fill="none"/>
</svg>
<svg style="left:0;top:0" width="1305" height="800" viewBox="0 0 1305 800"><defs><filter id="ab" x="-10%" y="-30%" width="120%" height="160%"><feGaussianBlur stdDeviation="0.5"/></filter></defs><g transform="translate(903.1,218.20000000000002)"><path d="M0 0L9.8 -8.3L10.1 -3.1L72.9 -1.7L72.9 0L10.1 3.1L10.1 8.3Z" fill="#7d8a8c" opacity=".55" filter="url(#ab)"/></g><g transform="translate(902.1,216.9)"><path d="M0 0L9.8 -8.3L10.1 -3.1L72.9 -1.7L72.9 0L10.1 3.1L10.1 8.3Z" fill="#e5352b"/></g><g transform="translate(906.2,276.40000000000003)"><path d="M0 0L9.8 -8.3L10.1 -3.1L72.9 -1.7L72.9 0L10.1 3.1L10.1 8.3Z" fill="#7d8a8c" opacity=".55" filter="url(#ab)"/></g><g transform="translate(905.2,275.1)"><path d="M0 0L9.8 -8.3L10.1 -3.1L72.9 -1.7L72.9 0L10.1 3.1L10.1 8.3Z" fill="#e5352b"/></g><g transform="translate(907.2,538.0999999999999)"><path d="M0 0L9.8 -8.3L10.1 -3.1L72.9 -1.7L72.9 0L10.1 3.1L10.1 8.3Z" fill="#7d8a8c" opacity=".55" filter="url(#ab)"/></g><g transform="translate(906.2,536.8)"><path d="M0 0L9.8 -8.3L10.1 -3.1L72.9 -1.7L72.9 0L10.1 3.1L10.1 8.3Z" fill="#e5352b"/></g></svg>
<!-- description box -->
<div class="a" style="left:574px;top:707px;width:713px;height:48px;background:#ffffe1;border:1px solid #8a909b;border-right:none;border-bottom:none;"></div>

<!-- taskbar buttons -->
<div class="a" style="left:24px;top:758px;width:140px;height:22px;background:#f0f0f0;border-top:1px solid #fff;border-left:1px solid #fff;border-right:1px solid #696969;border-bottom:1px solid #696969;"></div>
<div class="a" style="left:25px;top:759px;width:138px;height:20px;border-right:1px solid #a0a0a0;border-bottom:1px solid #a0a0a0;"></div>
<div class="a" style="left:168px;top:758px;width:140px;height:22px;background:#f0f0f0;border-top:1px solid #696969;border-left:1px solid #696969;border-right:1px solid #fff;border-bottom:1px solid #fff;"></div>
<div class="a" style="left:169px;top:759px;width:138px;height:20px;border-top:1px solid #a0a0a0;border-left:1px solid #a0a0a0;"></div>
<svg style="left:27px;top:761px" width="17" height="17" viewBox="0 0 17 17">
<path d="M0.6 3L2.6 2.4V14L0.6 15.8Z" fill="#a6b2be"/>
<path d="M4.6 0.5H9.8V1.5H4.6Z" fill="#dc9c14"/>
<path d="M2.4 2.6Q2.4 1.2 3.8 1.2H11.4Q12.9 1.2 12.9 2.6V13.6H2.4Z" fill="#fbdc60" stroke="#dc9c14" stroke-width="0.9"/>
<path d="M4.2 3.5h6.8M4.2 5.5h6.8" stroke="#8c4c08" stroke-width="1.1"/>
<path d="M3.6 6.9L15.9 5.6L13 13.9L0.7 15.7Z" fill="#f2f6f8" stroke="#939da8" stroke-width="0.8" opacity="0.62"/>
<path d="M4.4 8.9h1.9M7.9 7.8v2h2.9v-2" stroke="#3c4e72" stroke-width="1.1" fill="none"/>
</svg><svg style="left:171px;top:762px" width="17" height="17" viewBox="0 0 17 17">
<path d="M14.09 8.15 L15.26 8.71 L14.89 10.35 L13.60 10.35 L13.36 10.86 L14.17 11.86 L13.13 13.18 L11.97 12.63 L11.53 12.98 L11.82 14.23 L10.31 14.97 L9.50 13.97 L8.95 14.09 L8.67 15.35 L6.99 15.36 L6.70 14.10 L6.15 13.98 L5.35 14.99 L3.84 14.27 L4.12 13.01 L3.68 12.66 L2.52 13.23 L1.47 11.92 L2.27 10.91 L2.02 10.40 L0.73 10.41 L0.35 8.77 L1.51 8.21 L1.51 7.65 L0.34 7.09 L0.71 5.45 L2.00 5.45 L2.24 4.94 L1.43 3.94 L2.47 2.62 L3.63 3.17 L4.07 2.82 L3.78 1.57 L5.29 0.83 L6.10 1.83 L6.65 1.71 L6.93 0.45 L8.61 0.44 L8.90 1.70 L9.45 1.82 L10.25 0.81 L11.76 1.53 L11.48 2.79 L11.92 3.14 L13.08 2.57 L14.13 3.88 L13.33 4.89 L13.58 5.40 L14.87 5.39 L15.25 7.03 L14.09 7.59Z M10.90 7.90 A3.10 3.10 0 1 0 4.70 7.90 A3.10 3.10 0 1 0 10.90 7.90Z" fill="#303038" fill-rule="evenodd" transform="translate(0.7,0.7)" opacity=".78"/>
<path d="M14.09 8.15 L15.26 8.71 L14.89 10.35 L13.60 10.35 L13.36 10.86 L14.17 11.86 L13.13 13.18 L11.97 12.63 L11.53 12.98 L11.82 14.23 L10.31 14.97 L9.50 13.97 L8.95 14.09 L8.67 15.35 L6.99 15.36 L6.70 14.10 L6.15 13.98 L5.35 14.99 L3.84 14.27 L4.12 13.01 L3.68 12.66 L2.52 13.23 L1.47 11.92 L2.27 10.91 L2.02 10.40 L0.73 10.41 L0.35 8.77 L1.51 8.21 L1.51 7.65 L0.34 7.09 L0.71 5.45 L2.00 5.45 L2.24 4.94 L1.43 3.94 L2.47 2.62 L3.63 3.17 L4.07 2.82 L3.78 1.57 L5.29 0.83 L6.10 1.83 L6.65 1.71 L6.93 0.45 L8.61 0.44 L8.90 1.70 L9.45 1.82 L10.25 0.81 L11.76 1.53 L11.48 2.79 L11.92 3.14 L13.08 2.57 L14.13 3.88 L13.33 4.89 L13.58 5.40 L14.87 5.39 L15.25 7.03 L14.09 7.59Z M10.90 7.90 A3.10 3.10 0 1 0 4.70 7.90 A3.10 3.10 0 1 0 10.90 7.90Z" fill="#9192d3" fill-rule="evenodd" stroke="#9192d3" stroke-width="0.45" stroke-linejoin="round"/>
<circle cx="7.8" cy="7.9" r="2.9" fill="#f0f0f2" opacity=".85"/><circle cx="7.8" cy="7.9" r="3.3" fill="none" stroke="#34343f" stroke-width="0.9" opacity=".75" stroke-dasharray="9 30" transform="rotate(165 7.8 7.9)"/>
</svg>

<span class="t" style="left:51.0px;top:30px;font-size:12px;color:#000;transform:scaleX(0.9499);">R-Keeper 7</span>
<span class="t" style="left:111.4px;top:30px;font-size:12px;color:#000;transform:scaleX(0.9788);">станция</span>
<span class="t" style="left:158.1px;top:30px;font-size:12px;color:#000;transform:scaleX(0.9712);">менеджера</span>
<span class="t" style="left:223.8px;top:30px;font-size:12px;color:#000;transform:scaleX(1.0000);">-</span>
<span class="t" style="left:231.5px;top:30px;font-size:12px;color:#000;transform:scaleX(1.0090);">[Использование</span>
<span class="t" style="left:324.2px;top:30px;font-size:12px;color:#000;transform:scaleX(1.0016);">типов</span>
<span class="t" style="left:358.8px;top:30px;font-size:12px;color:#000;transform:scaleX(1.0310);">цен]</span>
<span class="t" style="left:385.8px;top:30px;font-size:12px;color:#000;transform:scaleX(0.9866);">(Ресторан:</span>
<span class="t" style="left:447.4px;top:30px;font-size:12px;color:#000;transform:scaleX(0.8918);">BarBQ,</span>
<span class="t" style="left:485.7px;top:30px;font-size:12px;color:#000;transform:scaleX(0.9886);">сервер:</span>
<span class="t" style="left:530.3px;top:30px;font-size:12px;color:#000;transform:scaleX(0.9469);">Сервер</span>
<span class="t" style="left:573.3px;top:30px;font-size:12px;color:#000;transform:scaleX(1.0207);">справочников</span>
<span class="t" style="left:655.0px;top:30px;font-size:12px;color:#000;transform:scaleX(0.8851);">[TESTQA_RK7])</span>
<span class="t" style="left:737.7px;top:30px;font-size:12px;color:#000;transform:scaleX(1.0000);">-</span>
<span class="t" style="left:744.5px;top:30px;font-size:12px;color:#000;transform:scaleX(1.0012);">[Использование</span>
<span class="t" style="left:837.0px;top:30px;font-size:12px;color:#000;transform:scaleX(0.9669);">типов</span>
<span class="t" style="left:871.1px;top:30px;font-size:12px;color:#000;transform:scaleX(1.0439);">цен]</span>
<span class="t" style="left:76.5px;top:58px;font-size:12px;color:#000;transform:scaleX(0.9618);"><u>П</u>равка</span>
<span class="t" style="left:130.4px;top:58px;font-size:12px;color:#000;transform:scaleX(0.9209);"><u>В</u>ид</span>
<span class="t" style="left:165.6px;top:58px;font-size:12px;color:#000;transform:scaleX(0.9464);"><u>П</u>ользователь</span>
<span class="t" style="left:254.5px;top:58px;font-size:12px;color:#000;transform:scaleX(0.9249);"><u>М</u>еню</span>
<span class="t" style="left:300.1px;top:58px;font-size:12px;color:#000;transform:scaleX(0.9184);">П<u>е</u>рсонал</span>
<span class="t" style="left:365.9px;top:58px;font-size:12px;color:#000;transform:scaleX(1.0068);"><u>З</u>аказ</span>
<span class="t" style="left:412.6px;top:58px;font-size:12px;color:#000;transform:scaleX(1.0138);"><u>Д</u>еньги</span>
<span class="t" style="left:466.6px;top:58px;font-size:12px;color:#000;transform:scaleX(0.9568);"><u>Н</u>астройки</span>
<span class="t" style="left:537.4px;top:58px;font-size:12px;color:#000;transform:scaleX(0.9160);"><u>О</u>тчеты</span>
<span class="t" style="left:590.3px;top:58px;font-size:12px;color:#000;transform:scaleX(0.9393);"><u>С</u>ервис</span>
<span class="t" style="left:643.7px;top:58px;font-size:12px;color:#000;transform:scaleX(0.9212);">Рас<u>ш</u>ирения</span>
<span class="t" style="left:723.1px;top:58px;font-size:12px;color:#000;transform:scaleX(0.9340);">Помо<u>щ</u>ь</span>
<span class="t" style="left:782.0px;top:58px;font-size:12px;color:#000;transform:scaleX(0.9573);">О<u>к</u>но</span>
<span class="t" style="left:67.2px;top:107px;font-size:12px;color:#000;transform:scaleX(0.9816);">Доставка</span>
<span class="t" style="left:67.2px;top:123px;font-size:12px;color:#000;transform:scaleX(0.9286);">Основная</span>
<span class="t" style="left:67.2px;top:139px;font-size:12px;color:#000;transform:scaleX(0.9327);">Самовывоз</span>
<span class="t" style="left:67.2px;top:155px;font-size:12px;color:#000;transform:scaleX(0.9218);">Себестоимость</span>
<span class="t" style="left:229.5px;top:111px;font-size:12px;color:#000;transform:scaleX(0.9559);">Использования</span>
<span class="t" style="left:339.8px;top:111px;font-size:12px;color:#000;transform:scaleX(0.9278);">Свойства</span>
<span class="t" style="left:229.9px;top:137px;font-size:12px;color:#000;transform:scaleX(0.9256);">Режим редактирования последовательности элементов</span>
<span class="t" style="left:220.0px;top:162px;font-size:12px;color:#fff;transform:scaleX(1.0108);font-weight:700;">Использования</span>
<span class="t" style="left:220.0px;top:180px;font-size:12px;color:#000;transform:scaleX(0.9411);">Ресторан</span>
<span class="t" style="left:317.8px;top:180px;font-size:12px;color:#000;transform:scaleX(0.8885);">1 BarBQ</span>
<span class="t" style="left:213.1px;top:236px;font-size:12px;color:#000;transform:scaleX(0.9304);">Основная</span>
<span class="t" style="left:283.0px;top:236px;font-size:12px;color:#000;transform:scaleX(0.9374);">Самовывоз</span>
<span class="t" style="left:363.5px;top:236px;font-size:12px;color:#fff;transform:scaleX(0.9797);">Доставка</span>
<span class="t" style="left:592.7px;top:133px;font-size:12px;color:#fff;transform:scaleX(1.0097);font-weight:700;">Использования</span>
<span class="t" style="left:592.7px;top:152px;font-size:12px;color:#808080;transform:scaleX(0.9529);">Название</span>
<span class="t" style="left:592.7px;top:171px;font-size:12px;color:#000;transform:scaleX(0.9471);">Бригада</span>
<span class="t" style="left:592.7px;top:190px;font-size:12px;color:#000;transform:scaleX(0.9424);">Кассовый сервер</span>
<span class="t" style="left:592.7px;top:209px;font-size:12px;color:#000;transform:scaleX(0.9682);">Категория заказа</span>
<span class="t" style="left:592.7px;top:228px;font-size:12px;color:#000;transform:scaleX(0.9559);">Торговая группа</span>
<span class="t" style="left:592.7px;top:247px;font-size:12px;color:#000;transform:scaleX(0.9306);">Концепция</span>
<span class="t" style="left:592.7px;top:266px;font-size:12px;color:#000;transform:scaleX(0.9216);">Стол</span>
<span class="t" style="left:592.7px;top:285px;font-size:12px;color:#000;transform:scaleX(0.9170);">Период</span>
<span class="t" style="left:592.7px;top:304px;font-size:12px;color:#000;transform:scaleX(0.9858);">Тип заказа</span>
<span class="t" style="left:592.7px;top:323px;font-size:12px;color:#000;transform:scaleX(0.9351);">Тип неплательщиков</span>
<span class="t" style="left:592.7px;top:342px;font-size:12px;color:#000;transform:scaleX(0.9431);">Работник</span>
<span class="t" style="left:592.7px;top:361px;font-size:12px;color:#000;transform:scaleX(1.0233);">Язык</span>
<span class="t" style="left:592.7px;top:380px;font-size:12px;color:#000;transform:scaleX(0.9310);">Группа работников</span>
<span class="t" style="left:592.7px;top:399px;font-size:12px;color:#000;transform:scaleX(0.9666);">Франчайзи</span>
<span class="t" style="left:592.7px;top:418px;font-size:12px;color:#000;transform:scaleX(0.9506);">Роль</span>
<span class="t" style="left:592.7px;top:437px;font-size:12px;color:#000;transform:scaleX(0.9071);">Станция</span>
<span class="t" style="left:592.7px;top:456px;font-size:12px;color:#000;transform:scaleX(0.9682);">Тип гостей</span>
<span class="t" style="left:592.7px;top:475px;font-size:12px;color:#000;transform:scaleX(0.9273);">План зала</span>
<span class="t" style="left:592.7px;top:494px;font-size:12px;color:#000;transform:scaleX(0.9213);">Порядок подачи</span>
<span class="t" style="left:592.7px;top:513px;font-size:12px;color:#000;transform:scaleX(0.9603);">Регион</span>
<span class="t" style="left:592.7px;top:532px;font-size:12px;color:#000;transform:scaleX(0.9411);">Ресторан</span>
<span class="t" style="left:592.3px;top:551px;font-size:12px;color:#000;transform:scaleX(0.9712);">Активен с</span>
<span class="t" style="left:592.3px;top:570px;font-size:12px;color:#000;transform:scaleX(0.9588);">Активен по</span>
<span class="t" style="left:592.7px;top:589px;font-size:12px;color:#000;transform:scaleX(0.9430);">Тип столов</span>
<span class="t" style="left:592.7px;top:608px;font-size:12px;color:#fff;transform:scaleX(1.0216);font-weight:700;">Главное</span>
<span class="t" style="left:592.7px;top:627px;font-size:12px;color:#808080;transform:scaleX(0.9067);">GUID</span>
<span class="t" style="left:592.7px;top:646px;font-size:12px;color:#808080;transform:scaleX(0.9180);">Идентификатор</span>
<span class="t" style="left:821.8px;top:152px;font-size:12px;color:#000;transform:scaleX(0.9189);font-style:italic;">Доставка</span>
<span class="t" style="left:833.3px;top:209px;font-size:12px;color:#000;transform:scaleX(0.9895);">5 Доставка</span>
<span class="t" style="left:833.3px;top:266px;font-size:12px;color:#000;transform:scaleX(0.9832);">14 Дост</span>
<span class="t" style="left:847.3px;top:361px;font-size:12px;color:#000;transform:scaleX(0.9477);font-style:italic;">Основной Язык</span>
<span class="t" style="left:833.3px;top:532px;font-size:12px;color:#000;transform:scaleX(0.8885);">1 BarBQ</span>
<span class="t" style="left:822.3px;top:627px;font-size:12px;color:#000;transform:scaleX(0.8831);font-style:italic;">{11BD06FC-BD20-4894-BE91-1146F2ECC9CF}</span>
<span class="t" style="left:822.3px;top:646px;font-size:12px;color:#000;transform:scaleX(0.9247);font-style:italic;">1000304</span>
<span class="t" style="left:576.8px;top:709px;font-size:12px;color:#000;transform:scaleX(0.9366);">Использования::</span>
<span class="t" style="left:46.0px;top:762px;font-size:12px;color:#000;transform:scaleX(0.9343);">Типы цен</span>
<span class="t" style="left:190.2px;top:763px;font-size:12px;color:#000;transform:scaleX(1.0025);font-weight:700;">Использование тип</span>
<!-- clip for task button text -->
<div class="a" style="left:306px;top:760px;width:1px;height:18px;background:#fff;"></div>
<div class="a" style="left:307px;top:758px;width:20px;height:22px;background:#f0f0f0;"></div>
<div class="a" style="left:307px;top:758px;width:1px;height:22px;background:#fff;"></div>

</body></html>
